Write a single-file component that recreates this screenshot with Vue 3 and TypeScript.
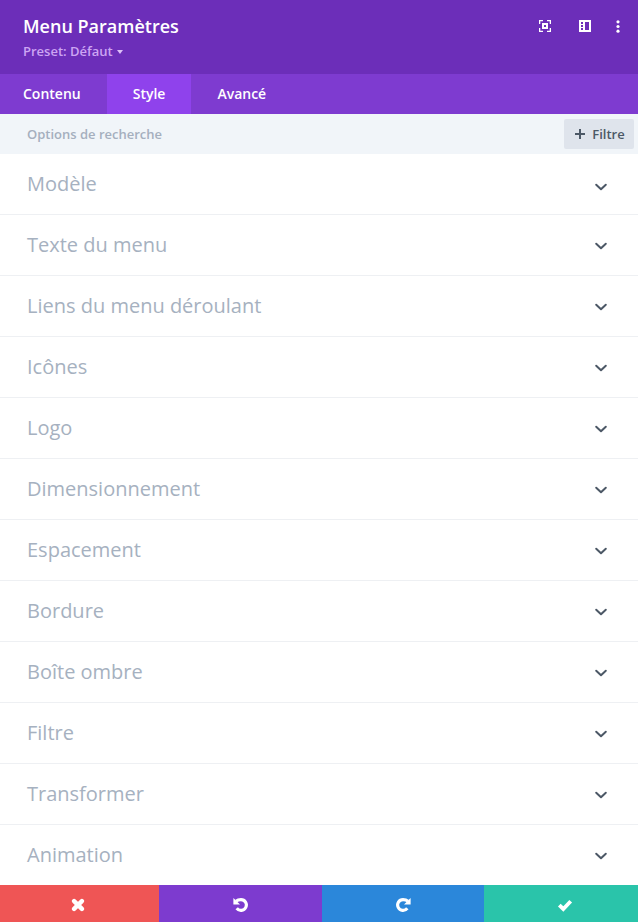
<script setup lang="ts">
import { ref } from 'vue'

const tabs: string[] = ['Contenu', 'Style', 'Avancé']
const activeTab = ref<string>('Style')

const sections: string[] = [
  'Modèle',
  'Texte du menu',
  'Liens du menu déroulant',
  'Icônes',
  'Logo',
  'Dimensionnement',
  'Espacement',
  'Bordure',
  'Boîte ombre',
  'Filtre',
  'Transformer',
  'Animation',
]
</script>

<template>
  <div class="modal">
    <header class="header">
      <div class="heading">
        <h1 class="title">Menu Paramètres</h1>
        <div class="preset">
          <span>Preset: Défaut</span>
          <svg class="caret" width="6" height="4" viewBox="0 0 6 4"><path d="M0 0h6L3 4z" /></svg>
        </div>
      </div>
      <div class="tools">
        <svg width="12" height="12" viewBox="0 0 12 12">
          <path d="M0 0h4v1.3H1.3V4H0zM8 0h4v4h-1.3V1.3H8zM0 8h1.3v2.7H4V12H0zM10.7 8H12v4H8v-1.3h2.7z" />
          <path fill-rule="evenodd" d="M3 3h6v6H3zM5 5v2h2V5z" />
        </svg>
        <svg width="12" height="12" viewBox="0 0 12 12">
          <path fill-rule="evenodd" d="M0 0h12v12H0zM6 2v8h4V2zM2 2v2h2V2zM2 5v2h2V5zM2 8v2h2V8z" />
        </svg>
        <svg class="dots" width="4" height="13" viewBox="0 0 4 13">
          <circle cx="2" cy="1.8" r="1.6" /><circle cx="2" cy="6.5" r="1.6" /><circle cx="2" cy="11.2" r="1.6" />
        </svg>
      </div>
    </header>

    <nav class="tabs">
      <button
        v-for="tab in tabs"
        :key="tab"
        class="tab"
        :class="{ active: tab === activeTab }"
        @click="activeTab = tab"
      >{{ tab }}</button>
    </nav>

    <div class="search">
      <span class="placeholder">Options de recherche</span>
      <button class="filter">
        <svg width="10" height="10" viewBox="0 0 10 10"><path d="M5 0v10M0 5h10" /></svg>
        <span>Filtre</span>
      </button>
    </div>

    <main class="sections">
      <section v-for="name in sections" :key="name" class="section">
        <h2 class="name">{{ name }}</h2>
        <svg class="chevron" width="14" height="8" viewBox="0 0 14 8"><path d="M2.2 1.7 7 6.2l4.8-4.5" /></svg>
      </section>
    </main>

    <footer class="footer">
      <button class="action cancel">
        <svg width="14" height="14" viewBox="0 0 14 14"><path class="thick" d="M3.1 3.1l7.8 7.8M10.9 3.1l-7.8 7.8" /></svg>
      </button>
      <button class="action undo">
        <svg width="16" height="16" viewBox="0 0 16 16">
          <path class="arc" d="M3 4.2C4.4 3 6 2.6 8 2.6A5.4 5.4 0 1 1 3.7 11.3" />
          <path class="head" d="M.4 1 7 7.4H.4z" />
        </svg>
      </button>
      <button class="action redo">
        <svg width="16" height="16" viewBox="0 0 16 16">
          <path class="arc" d="M13 4.2C11.6 3 10 2.6 8 2.6A5.4 5.4 0 1 0 12.3 11.3" />
          <path class="head" d="M15.6 1v6.4H9z" />
        </svg>
      </button>
      <button class="action save">
        <svg width="16" height="14" viewBox="0 0 16 14"><path class="check" d="M2.3 7.2 6.3 11l7.4-7.7" /></svg>
      </button>
    </footer>
  </div>
</template>

<style>
body {
  margin: 0;
  background: #fff;
}
</style>

<style scoped>
.modal {
  display: flex;
  flex-direction: column;
  height: 922px;
  font-family: "Open Sans", "Noto Sans", sans-serif;
  font-weight: 600;
  overflow: hidden;
}
button {
  border: 0;
  margin: 0;
  padding: 0;
  font: inherit;
  color: inherit;
}
svg {
  display: block;
  flex: none;
}
.header {
  display: flex;
  justify-content: space-between;
  box-sizing: border-box;
  height: 74px;
  padding: 14px 18px 0 23px;
  background: #6c2eb9;
  color: #fff;
}
.title {
  margin: 0;
  font-size: 18px;
  line-height: 25px;
  font-weight: 600;
}
.preset {
  display: flex;
  align-items: center;
  gap: 4px;
  margin-top: 3px;
  font-size: 13px;
  line-height: 18px;
  color: #cda5f3;
}
.caret {
  margin-top: 1px;
  fill: #dcc0f8;
}
.tools {
  display: flex;
  gap: 28px;
  padding-top: 6px;
  fill: #fff;
}
.dots {
  margin-left: -3px;
}
.tabs {
  display: flex;
  height: 40px;
  background: #7e3bd0;
  color: #fff;
  font-size: 14px;
}
.tab {
  padding: 0 26px 2px;
  background: transparent;
}
.tab:first-child {
  padding-left: 23px;
}
.tab.active {
  background: #8f42ec;
}
.search {
  display: flex;
  align-items: center;
  justify-content: space-between;
  box-sizing: border-box;
  height: 40px;
  padding: 0 4px 0 27px;
  background: #f1f5f9;
  font-size: 13px;
  color: #a5afbe;
}
.filter {
  display: flex;
  align-items: center;
  justify-content: center;
  box-sizing: border-box;
  gap: 7px;
  width: 70px;
  height: 30px;
  padding-left: 2px;
  border-radius: 2px;
  background: #dfe4ec;
  color: #4c5866;
}
.filter path {
  stroke: #4c5866;
  stroke-width: 2;
}
.sections {
  height: 731px;
}
.section {
  display: flex;
  align-items: center;
  justify-content: space-between;
  height: 60px;
  padding: 0 30px 0 27px;
  border-bottom: 1px solid #eef0f3;
}
.section:last-child {
  border-bottom: 0;
}
.name {
  margin: 0;
  font-size: 20px;
  line-height: 28px;
  font-weight: 400;
  color: #a6b1c0;
}
.chevron {
  margin-top: 2px;
  fill: none;
  stroke: #4c5866;
  stroke-width: 2;
  stroke-linecap: round;
  stroke-linejoin: round;
}
.section:first-child .chevron {
  margin-top: 5px;
}
.footer {
  display: grid;
  grid-template-columns: 159px 163px 162px 154px;
  height: 37px;
}
.action {
  display: flex;
  align-items: center;
  justify-content: center;
  box-sizing: border-box;
  padding-top: 3px;
}
.cancel {
  background: #ef5555;
  padding-right: 3px;
}
.undo {
  background: #7d3bcf;
}
.redo {
  background: #2b87da;
}
.save {
  background: #2ac4aa;
  padding-left: 7px;
}
.action path {
  fill: none;
  stroke: #fff;
}
.action .thick {
  stroke-width: 4.4;
  stroke-linecap: round;
}
.action .arc {
  stroke-width: 3.1;
}
.action .head {
  fill: #fff;
  stroke: none;
}
.action .check {
  stroke-width: 3.8;
}
</style>
